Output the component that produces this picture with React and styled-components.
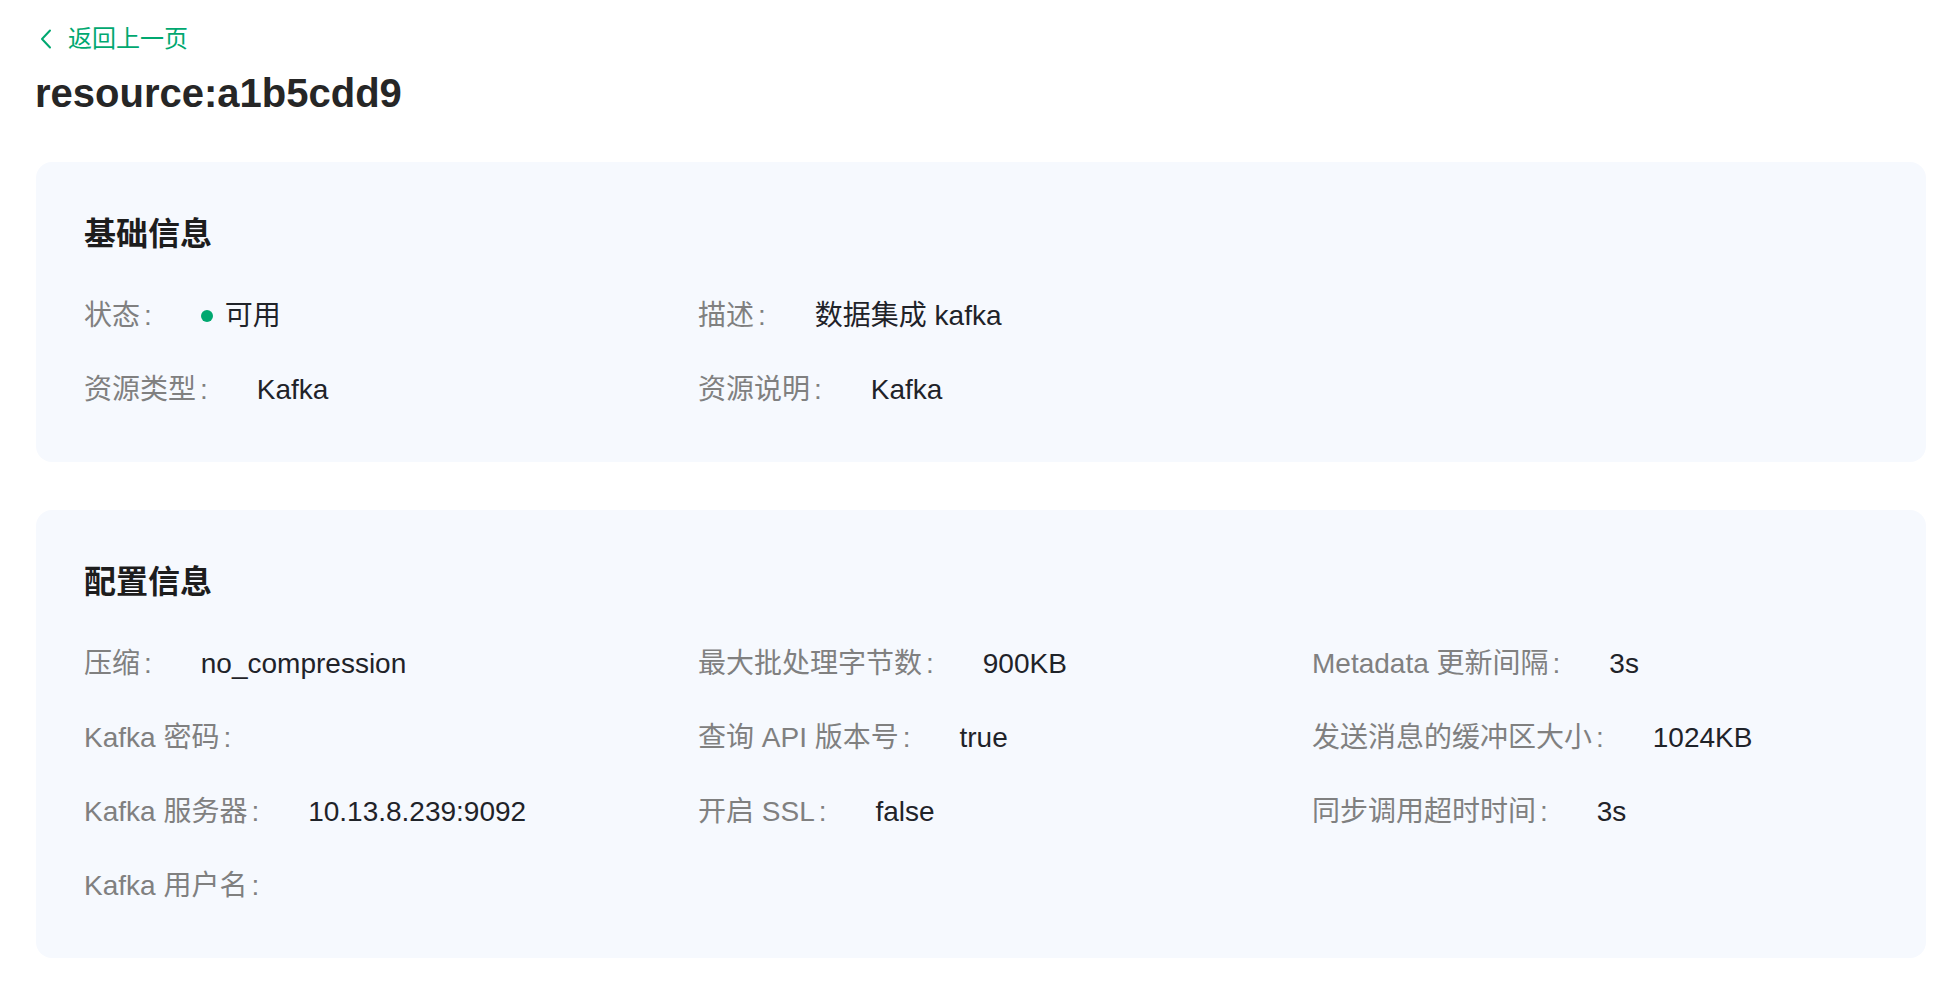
import React from 'react'
import styled, { createGlobalStyle } from 'styled-components'

const GlobalStyle = createGlobalStyle`
    body{
        margin: 0;
        background: #ffffff;
        font-family: "Liberation Sans", "Noto Sans CJK SC", sans-serif;
    }
`

const basicItems = [
    { label: '状态', status: '可用' },
    { label: '描述', value: '数据集成 kafka' },
    null,
    { label: '资源类型', value: 'Kafka' },
    { label: '资源说明', value: 'Kafka' },
]

const configItems = [
    { label: '压缩', value: 'no_compression' },
    { label: '最大批处理字节数', value: '900KB' },
    { label: 'Metadata 更新间隔', value: '3s' },
    { label: 'Kafka 密码', value: '' },
    { label: '查询 API 版本号', value: 'true' },
    { label: '发送消息的缓冲区大小', value: '1024KB' },
    { label: 'Kafka 服务器', value: '10.13.8.239:9092' },
    { label: '开启 SSL', value: 'false' },
    { label: '同步调用超时时间', value: '3s' },
    { label: 'Kafka 用户名', value: '' },
]

const Section = ({ title, items }) => (
    <Card>
        <CardTitle>{title}</CardTitle>
        <Grid>
            {items.map((item, i) =>
                item ? (
                    <Item key={i}>
                        <Label>{item.label}</Label>
                        {item.status ? (
                            <Value>
                                <Dot />
                                {item.status}
                            </Value>
                        ) : (
                            <Value>{item.value}</Value>
                        )}
                    </Item>
                ) : (
                    <Item key={i} />
                )
            )}
        </Grid>
    </Card>
)

const App = () => {
    return (
        <>
            <GlobalStyle />
            <Page>
                <BackLink>
                    <svg width="12" height="20" viewBox="0 0 12 20" fill="none">
                        <polyline points="10,1.5 2,10 10,18.5" stroke="currentColor" strokeWidth="2" strokeLinecap="round" strokeLinejoin="round" />
                    </svg>
                    <span>返回上一页</span>
                </BackLink>
                <Title>resource:a1b5cdd9</Title>
                <Section title="基础信息" items={basicItems} />
                <Section title="配置信息" items={configItems} />
            </Page>
        </>
    )
}

const Page = styled.div`
    padding: 0 34px 40px 36px;
`

const BackLink = styled.a`
    display: flex;
    align-items: center;
    gap: 16px;
    margin-left: 4px;
    padding-top: 21px;
    height: 36px;
    font-size: 24px;
    line-height: 36px;
    color: #00a870;
    cursor: pointer;
    text-decoration: none;
`

const Title = styled.h1`
    margin: 8px 0 0 -1px;
    font-size: 40px;
    line-height: 56px;
    font-weight: 700;
    color: #262626;
`

const Card = styled.section`
    margin-top: 41px;
    padding: 48px 0 50px 48px;
    background: #f6f9fe;
    border-radius: 16px;

    & + &{
        margin-top: 48px;
    }
`

const CardTitle = styled.h2`
    margin: 0 0 36px;
    font-size: 32px;
    line-height: 48px;
    font-weight: 700;
    color: #1d1d1d;
`

const Grid = styled.div`
    display: grid;
    grid-template-columns: repeat(3, 1fr);
    row-gap: 30px;
`

const Item = styled.div`
    display: flex;
    align-items: center;
    height: 44px;
    font-size: 28px;
    line-height: 44px;
`

const Label = styled.span`
    color: #808080;
    white-space: nowrap;

    &::after{
        content: ':';
        margin: 0 49px 0 4px;
    }
`

const Value = styled.span`
    display: flex;
    align-items: center;
    color: #1f2329;
    white-space: nowrap;
`

const Dot = styled.span`
    width: 12px;
    height: 12px;
    margin-right: 12px;
    border-radius: 50%;
    background: #00a870;
`

export default App
